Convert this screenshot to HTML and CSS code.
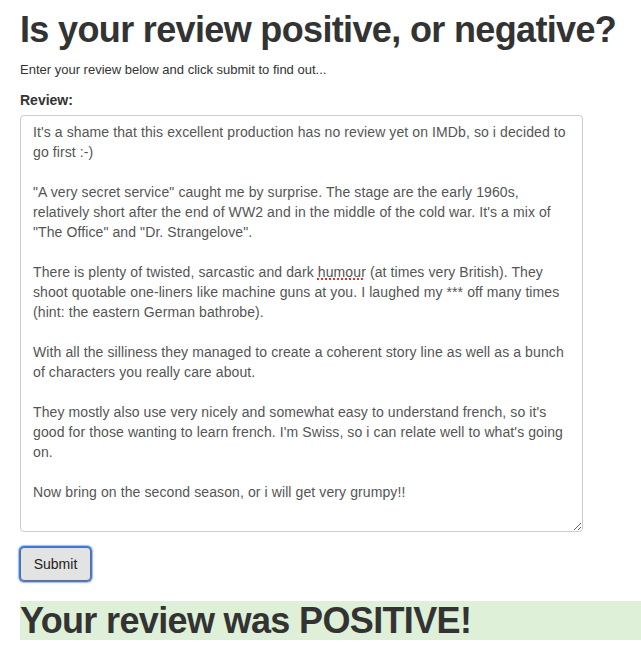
FILE: index.html
```html
<!DOCTYPE html>
<html lang="en">
<head>
<meta charset="utf-8">
<title>Review sentiment</title>
<link rel="stylesheet" href="styles.css">
</head>
<body>
<div class="page">
  <h1 class="title">Is your review positive, or negative?</h1>
  <p class="intro">Enter your review below and click submit to find out...</p>
  <form class="form">
    <div class="form-group">
      <label class="label" for="review">Review:</label>
      <div class="review-box" id="review" role="textbox" aria-multiline="true">It's a shame that this excellent production has no review yet on IMDb, so i decided to go first :-)

"A very secret service" caught me by surprise. The stage are the early 1960s, relatively short after the end of WW2 and in the middle of the cold war. It's a mix of "The Office" and "Dr. Strangelove".

There is plenty of twisted, sarcastic and dark <span class="misspelled">humour</span> (at times very British). They shoot quotable one-liners like machine guns at you. I laughed my *** off many times (hint: the eastern German bathrobe).

With all the silliness they managed to create a coherent story line as well as a bunch of characters you really care about.

They mostly also use very nicely and somewhat easy to understand french, so it's good for those wanting to learn french. I'm Swiss, so i can relate well to what's going on.

Now bring on the second season, or i will get very grumpy!!</div>
    </div>
    <button type="button" class="btn">Submit</button>
  </form>
  <h1 class="result">Your review was POSITIVE!</h1>
</div>
</body>
</html>
```
FILE: styles.css
```css
html, body {
  margin: 0;
  padding: 0;
  background: #fff;
}
body {
  font-family: "Liberation Sans", Arial, Helvetica, sans-serif;
  font-size: 14px;
  line-height: 20px;
  color: #333;
  overflow: hidden;
}
.page {
  padding: 0 0 0 20px;
}
.title {
  font-size: 36px;
  line-height: 1.1;
  font-weight: bold;
  letter-spacing: -0.65px;
  margin: 10px 0 10px 0;
}
.intro {
  font-size: 13px;
  margin: 0 0 10px 0;
}
.form {
  margin: 0;
}
.form-group {
  margin-bottom: 15px;
}
.label {
  display: block;
  font-weight: bold;
  margin-bottom: 5px;
}
.review-box {
  box-sizing: border-box;
  width: 563px;
  height: 417px;
  padding: 6px 12px;
  border: 1px solid #ccc;
  border-radius: 4px;
  white-space: pre-wrap;
  overflow: hidden;
  resize: vertical;
  color: #555;
  letter-spacing: 0.1px;
  background: #fff;
}
.misspelled {
  text-decoration: underline dotted #e0302a;
  text-decoration-thickness: 2px;
  text-underline-offset: 2px;
}
.btn {
  display: block;
  box-sizing: border-box;
  width: 71px;
  height: 34px;
  margin: 0;
  padding: 6px 12px;
  font-family: inherit;
  font-size: 14px;
  line-height: 20px;
  color: #222;
  background: #e3e3e3;
  border: 1px solid #5a6f8f;
  border-radius: 4px;
  box-shadow: 0 0 0 1px #3f7fe0, 0 0 1px 2px rgba(80, 140, 240, 0.6);
}
.result {
  font-size: 36px;
  line-height: 1.1;
  font-weight: bold;
  letter-spacing: -0.65px;
  margin: 20px 0 0 0;
  background: #dff0d8;
}
```
